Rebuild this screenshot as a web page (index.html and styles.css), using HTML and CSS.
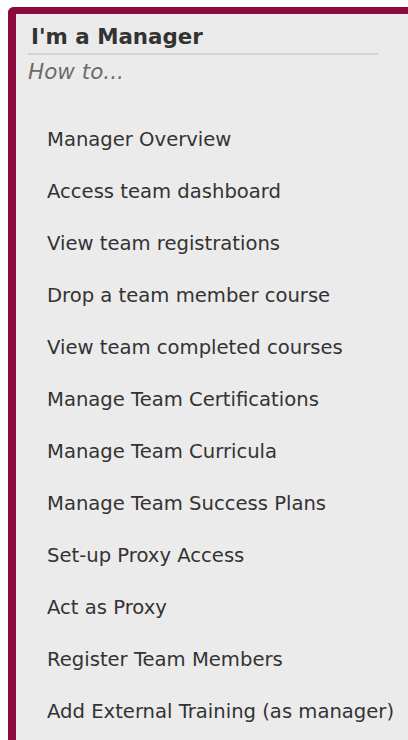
FILE: index.html
```html
<!DOCTYPE html>
<html lang="en">
<head>
<meta charset="utf-8">
<title>I'm a Manager</title>
<link rel="stylesheet" href="styles.css">
</head>
<body>
  <section class="panel">
    <h2 class="panel-title">I'm a Manager</h2>
    <p class="panel-sub">How to...</p>
    <ul class="howto-list">
      <li><a href="#">Manager Overview</a></li>
      <li><a href="#">Access team dashboard</a></li>
      <li><a href="#">View team registrations</a></li>
      <li><a href="#">Drop a team member course</a></li>
      <li><a href="#">View team completed courses</a></li>
      <li><a href="#">Manage Team Certifications</a></li>
      <li><a href="#">Manage Team Curricula</a></li>
      <li><a href="#">Manage Team Success Plans</a></li>
      <li><a href="#">Set-up Proxy Access</a></li>
      <li><a href="#">Act as Proxy</a></li>
      <li><a href="#">Register Team Members</a></li>
      <li><a href="#">Add External Training (as manager)</a></li>
    </ul>
  </section>
</body>
</html>
```

FILE: styles.css
```css
html, body {
  margin: 0;
  padding: 0;
  background: #ffffff;
  overflow: hidden;
}

body {
  font-family: "DejaVu Sans", "Liberation Sans", sans-serif;
  color: #333333;
}

/* Panel runs off the right edge, so only the top and left borders show */
.panel {
  margin: 7px 0 0 8px;
  height: 733px;
  box-sizing: border-box;
  background: #ebebeb;
  border-top: 7px solid #8b0b3f;
  border-left: 8px solid #8b0b3f;
  border-top-left-radius: 6px;
  padding: 11px 0 0 12px;
}

.panel-title {
  width: 350px;
  margin: 0;
  padding: 0 0 4px 3px;
  box-sizing: border-box;
  font-size: 21.4px;
  line-height: 24px;
  font-weight: bold;
  color: #333333;
  border-bottom: 2px solid #d2d2d2;
}

.panel-sub {
  margin: 5px 0 0;
  font-size: 21.5px;
  line-height: 24px;
  font-style: italic;
  color: #6b6b6b;
}

.howto-list {
  list-style: none;
  margin: 30px 0 0;
  padding: 0 0 0 19px;
}

.howto-list li {
  height: 52px;
  line-height: 52px;
  font-size: 19.6px;
}

.howto-list a {
  color: #333333;
  text-decoration: none;
}
```
